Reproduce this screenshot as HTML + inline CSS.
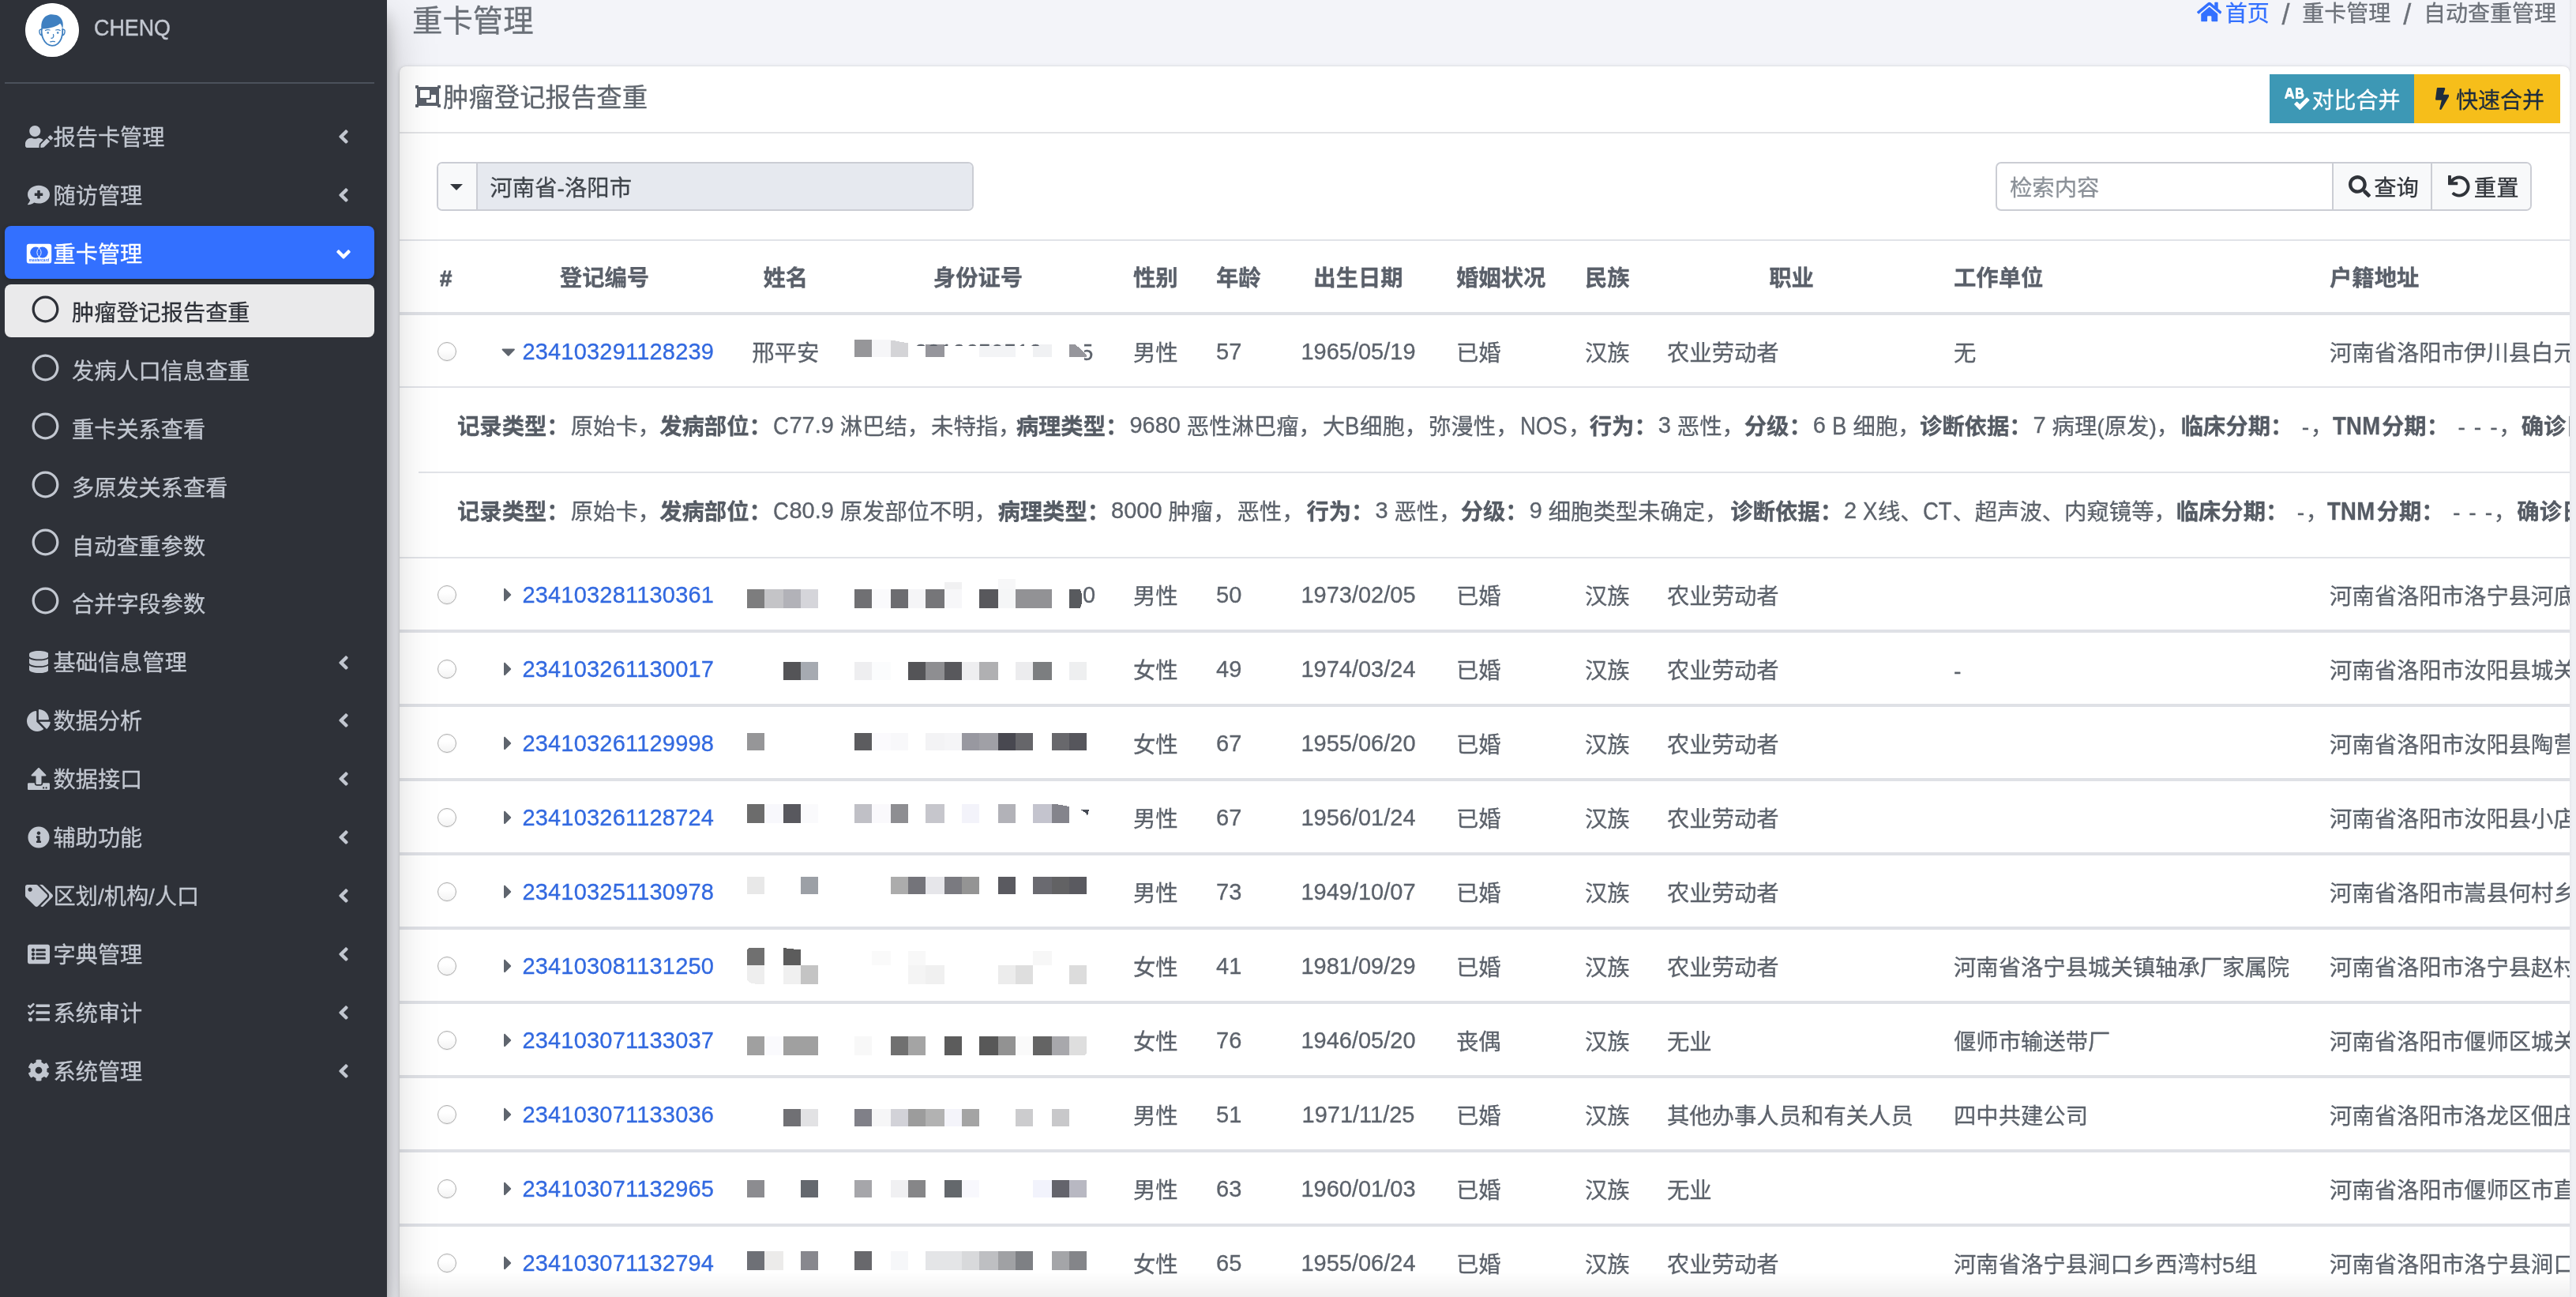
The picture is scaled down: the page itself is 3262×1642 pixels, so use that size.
<!DOCTYPE html><html lang="zh-CN"><head><meta charset="utf-8"><title>重卡管理</title><style>
*{box-sizing:border-box}
html,body{margin:0;padding:0}
body{width:3262px;height:1642px;overflow:hidden;position:relative;background:#f3f4f9;
 font-family:"Liberation Sans","Noto Sans CJK SC",sans-serif;font-size:28.35px;color:#5c626b;line-height:42px;-webkit-text-stroke:.3px}
svg.ic{display:inline-block;vertical-align:middle;flex:none}
a{color:#3269e0;text-decoration:none}
#sb{position:absolute;left:0;top:0;width:490px;height:1642px;background:#2e3138;z-index:5;will-change:transform;
 box-shadow:0 28px 56px rgba(0,0,0,.25),0 20px 20px rgba(0,0,0,.22)}
#av{position:absolute;left:32px;top:4px;width:68px;height:68px;border-radius:50%;background:#fff;overflow:hidden}
#un{position:absolute;left:118.5px;top:13.2px;font-size:30px;line-height:44px;color:#c2c7d0;white-space:nowrap;transform-origin:0 50%;transform:scaleX(.895);-webkit-text-stroke:.45px #c2c7d0}
#dv{position:absolute;left:6px;top:104px;width:468px;height:2px;background:#4b515b}
.ni{position:absolute;left:6px;width:468px;height:67px;border-radius:8px;color:#c2c7d0;white-space:nowrap}
.ni.act{background:#3370ff;color:#fff;box-shadow:0 2px 6px rgba(0,0,0,.24)}
.ni.sub.act{background:#eaeaeb;color:#2e3138;box-shadow:none}
.ni .ib{position:absolute;left:25.5px;top:21.2px;width:35px;height:28px;text-align:center;line-height:28px}
.ni .ib svg{vertical-align:top}
.ni .tx{position:absolute;left:61.5px;top:15.4px;line-height:42px;font-size:28.2px}
.ni.sub .ib{left:34.3px;top:14.3px;width:35px;height:35px}
.ni.sub .tx{left:85px}
.ni .ch{position:absolute;left:422px;top:21.6px;width:14px;height:28px;display:block;line-height:0}
.ni .ch svg{display:block}
.ni.act .ch{transform:rotate(-90deg);left:421.5px;top:22.1px}
#main{position:absolute;left:490px;top:0;width:2772px;height:1642px;will-change:transform}
#h1{position:absolute;left:32px;top:-2.5px;font-size:38.4px;line-height:57px;color:#6b7078;white-space:nowrap}
#bc{position:absolute;right:25px;top:-3.5px;line-height:42px;font-size:28px;color:#6c7179;white-space:nowrap}
#bc a{color:#3370ff}
#bc .sep{display:inline-block;padding:0 15.8px;font-size:36px;line-height:42px;vertical-align:top;position:relative;top:1px}
#card{position:absolute;left:16px;top:84px;width:2748px;height:1600px;background:#fff;border-radius:8px;
 box-shadow:0 0 2px rgba(0,0,0,.125),0 2px 6px rgba(0,0,0,.2);overflow:hidden}
#ch{position:absolute;left:0;top:0;width:100%;height:85px;border-bottom:2px solid #e3e4e7}
#ct{position:absolute;left:19px;top:16px;font-size:32.4px;line-height:48px;color:#5f656d;white-space:nowrap}
.btn{position:absolute;top:10px;height:62px;line-height:68px;padding:0 18px;white-space:nowrap;font-size:28px}
#b1{left:2368px;width:183px;background:#3d98b5;color:#fff}
#b2{left:2551px;width:185px;background:#f6be1a;color:#1f2d3d}
#flt{position:absolute;left:0;top:86px;width:100%;height:134px}
.ig{position:absolute;top:35px;height:62px;border:2px solid #cbcdd4;border-radius:7px;overflow:hidden;display:flex;background:#fff}
.ig>div{height:58px;line-height:62.6px;white-space:nowrap}
#tb{position:absolute;left:0;top:219px;border-collapse:collapse;table-layout:fixed;width:3100px}
#tb th,#tb td{padding:27px 24px 21px;line-height:42px;border-top:2px solid #e1e3e8;border-bottom:4px solid #dfe1e6;white-space:nowrap;text-align:left;vertical-align:top;overflow:visible}
#tb th{padding-top:26px;font-weight:bold;border-bottom:4px solid #dfe1e6;color:#5a606a}
#tb tr.r0 td,#tb td.dt{border-bottom:2px solid #e1e3e8}
#tb td{border-top:none}
#tb th:first-child,#tb td:first-child{padding-left:48px}
.c{text-align:center !important}
.rd{display:inline-block;width:24px;height:24px;border-radius:50%;border:1.4px solid #adadad;background:linear-gradient(#fff 40%,#f3f3f3);vertical-align:middle;margin-top:-9px;box-shadow:inset 0 1px 2px rgba(0,0,0,.06),0 1px 1px rgba(0,0,0,.05)}
.lk,.n{font-size:29px;position:relative;top:-2px;line-height:28px}
.lk{margin-left:1.5px;letter-spacing:.2px}
.ex{display:inline-block;width:17.5px;height:28px;vertical-align:middle;margin-top:-9px;margin-left:3px;text-align:center}
.ex svg{vertical-align:top}
.dt{padding:0 !important}
.dt .d1{height:106px;padding:27.8px 0 0 73px;}
.dt .d2{height:108px;padding:27.5px 0 0 73px;border-top:2px solid #e1e3e8;margin-left:24px;padding-left:49px}
.dt b{color:#555b64}
.g{display:inline-block;width:2px}
.sg{display:inline-block;white-space:pre}
.hy{display:inline-block;width:12.5px;text-align:center}
.u{display:inline-block;transform:scale(.97,1.075);transform-origin:0 73.4%}
#mz{position:absolute;left:0;top:0}
#bot{position:absolute;left:506px;top:1610px;width:2748px;height:32px;z-index:4;background:linear-gradient(rgba(0,0,0,0),rgba(0,0,0,.06))}
#rt{position:absolute;left:3254px;top:0;width:8px;height:1642px;z-index:8;background:linear-gradient(90deg,#e6e7ec,#eff0f4 40%)}
</style></head><body><div id="sb"><div id="av"><svg width="68" height="68" viewBox="0 0 68 68"><circle cx="34" cy="34" r="34" fill="#fff"/>
<path d="M20.5 33c-1.2-9 2.2-16.5 9.5-18.3 3.2-.9 5.5-.3 7.2.1 5.800.2 10.600 5.500 10.600 12.300 0 2.100-.200 4.200-.700 5.900-.500-3.200-1.600-5.800-3-7.300-3.800 3.600-12 6.200-20.700 6.800-1.500.100-2.500.200-2.900.500z" fill="#3f80c1"/>
<path d="M20.800 32.500c-.400 4.600.200 9 1.900 12.700 2.300 5.100 6.400 8.600 11.300 8.600 5.200 0 9.400-3.700 11.600-9 1.500-3.600 2-7.900 1.600-12" fill="none" stroke="#3f80c1" stroke-width="1.800" stroke-linecap="round"/>
<path d="M20.800 33.500c-2-.700-3.200.500-2.900 2.900.300 2.300 1.600 4.300 3.600 4.500M47.200 33.500c2-.700 3.200.500 2.900 2.900-.300 2.300-1.600 4.300-3.600 4.500" fill="none" stroke="#3f80c1" stroke-width="1.400" stroke-linecap="round"/>
<path d="M25.500 34.500c1.700-1 3.700-1.100 5.500-.500M38.800 34c1.800-.700 3.800-.500 5.400.500" fill="none" stroke="#3f80c1" stroke-width="1.300" stroke-linecap="round"/>
<circle cx="28.700" cy="37.500" r="1.300" fill="#3f80c1"/><circle cx="41.200" cy="37.500" r="1.300" fill="#3f80c1"/>
<path d="M35.500 39.500c.600 1.800.500 3.500-.900 4.600-.500.400-1.200.400-1.700.100" fill="none" stroke="#3f80c1" stroke-width="1.200" stroke-linecap="round"/>
<path d="M31.800 48.800c1.800-.500 3.700-.600 5.500-.200" fill="none" stroke="#3f80c1" stroke-width="1.400" stroke-linecap="round"/></svg></div><div id="un">CHENQ</div><div id="dv"></div><div class="ni" style="top:137.9px"><span class="ib"><svg class="ic" width="35.0" height="28" viewBox="0 0 640 512" ><path fill="currentColor" d="M224 256c70.7 0 128-57.3 128-128S294.7 0 224 0 96 57.3 96 128s57.3 128 128 128zm89.6 32h-16.7c-22.2 10.2-46.9 16-72.9 16s-50.6-5.8-72.9-16h-16.7C60.2 288 0 348.2 0 422.4V464c0 26.5 21.5 48 48 48h274.9c-2.4-6.8-3.4-14-2.6-21.3l6.8-60.9 1.2-11.1 7.9-7.9 77.3-77.3c-24.5-27.7-60-45.500-99.900-45.500zm45.300 145.300l-6.800 61c-1.100 10.200 7.500 18.800 17.600 17.600l60.900-6.800 137.900-137.900-71.700-71.700-137.900 137.800zM633 268.900L595.100 231c-9.300-9.300-24.500-9.300-33.800 0l-37.800 37.800-4.100 4.100 71.800 71.700 41.800-41.800c9.300-9.400 9.300-24.500 0-33.900z"/></svg></span><span class="tx">报告卡管理</span><span class="ch"><svg class="ic" width="14.0" height="28" viewBox="0 0 256 512" ><path fill="currentColor" d="M31.7 239l136-136c9.4-9.4 24.6-9.4 33.9 0l22.6 22.6c9.4 9.4 9.4 24.6 0 33.9L127.9 256l96.4 96.4c9.4 9.4 9.4 24.6 0 33.9L201.7 409c-9.4 9.4-24.6 9.4-33.9 0l-136-136c-9.5-9.4-9.5-24.6-.1-34z"/></svg></span></div><div class="ni" style="top:211.8px"><span class="ib"><svg class="ic" width="28.0" height="28" viewBox="0 0 512 512" ><path fill="currentColor" d="M256 32C114.620 32 0 125.120 0 240c0 49.560 21.410 95 57 130.740C44.460 421.050 2.700 466 2.200 466.500a8 8 0 0 0-1.500 8.700 7.830 7.830 0 0 0 7.300 4.800c66.300 0 116-31.800 140.600-51.400A304.660 304.660 0 0 0 256 448c141.390 0 256-93.120 256-208S397.390 32 256 32zm96 232a8 8 0 0 1-8 8h-56v56a8 8 0 0 1-8 8h-48a8 8 0 0 1-8-8v-56h-56a8 8 0 0 1-8-8v-48a8 8 0 0 1 8-8h56v-56a8 8 0 0 1 8-8h48a8 8 0 0 1 8 8v56h56a8 8 0 0 1 8 8z"/></svg></span><span class="tx">随访管理</span><span class="ch"><svg class="ic" width="14.0" height="28" viewBox="0 0 256 512" ><path fill="currentColor" d="M31.7 239l136-136c9.4-9.4 24.6-9.4 33.9 0l22.6 22.6c9.4 9.4 9.4 24.6 0 33.9L127.9 256l96.4 96.4c9.4 9.4 9.4 24.6 0 33.9L201.7 409c-9.4 9.4-24.6 9.4-33.9 0l-136-136c-9.5-9.4-9.5-24.6-.1-34z"/></svg></span></div><div class="ni act" style="top:285.7px"><span class="ib"><svg class="ic" width="35" height="28" viewBox="0 0 35 28"><rect x="1.8" y="1.8" width="31.4" height="24.6" rx="3" fill="currentColor"/>
<circle cx="13.2" cy="12.6" r="7" fill="#3370ff"/><circle cx="21.8" cy="12.6" r="7" fill="#3370ff"/>
<path d="M17.5 7.1a7 7 0 0 1 0 11a7 7 0 0 1 0-11z" fill="none" stroke="currentColor" stroke-width="0.9"/>
<text x="17.5" y="24.2" text-anchor="middle" font-family="Liberation Sans,sans-serif" font-size="4.7" font-weight="bold" font-style="italic" fill="#3370ff">mastercard</text></svg></span><span class="tx">重卡管理</span><span class="ch"><svg class="ic" width="14.0" height="28" viewBox="0 0 256 512" ><path fill="currentColor" d="M31.7 239l136-136c9.4-9.4 24.6-9.4 33.9 0l22.6 22.6c9.4 9.4 9.4 24.6 0 33.9L127.9 256l96.4 96.4c9.4 9.4 9.4 24.6 0 33.9L201.7 409c-9.4 9.4-24.6 9.4-33.9 0l-136-136c-9.5-9.4-9.5-24.6-.1-34z"/></svg></span></div><div class="ni sub act" style="top:359.6px"><span class="ib"><svg class="ic" width="35.0" height="35" viewBox="0 0 512 512" ><path fill="currentColor" d="M256 8C119 8 8 119 8 256s111 248 248 248 248-111 248-248S393 8 256 8zm0 448c-110.5 0-200-89.5-200-200S145.5 56 256 56s200 89.5 200 200-89.5 200-200 200z"/></svg></span><span class="tx">肿瘤登记报告查重</span></div><div class="ni sub" style="top:433.5px"><span class="ib"><svg class="ic" width="35.0" height="35" viewBox="0 0 512 512" ><path fill="currentColor" d="M256 8C119 8 8 119 8 256s111 248 248 248 248-111 248-248S393 8 256 8zm0 448c-110.5 0-200-89.5-200-200S145.5 56 256 56s200 89.5 200 200-89.5 200-200 200z"/></svg></span><span class="tx">发病人口信息查重</span></div><div class="ni sub" style="top:507.4px"><span class="ib"><svg class="ic" width="35.0" height="35" viewBox="0 0 512 512" ><path fill="currentColor" d="M256 8C119 8 8 119 8 256s111 248 248 248 248-111 248-248S393 8 256 8zm0 448c-110.5 0-200-89.5-200-200S145.5 56 256 56s200 89.5 200 200-89.5 200-200 200z"/></svg></span><span class="tx">重卡关系查看</span></div><div class="ni sub" style="top:581.3px"><span class="ib"><svg class="ic" width="35.0" height="35" viewBox="0 0 512 512" ><path fill="currentColor" d="M256 8C119 8 8 119 8 256s111 248 248 248 248-111 248-248S393 8 256 8zm0 448c-110.5 0-200-89.5-200-200S145.5 56 256 56s200 89.5 200 200-89.5 200-200 200z"/></svg></span><span class="tx">多原发关系查看</span></div><div class="ni sub" style="top:655.2px"><span class="ib"><svg class="ic" width="35.0" height="35" viewBox="0 0 512 512" ><path fill="currentColor" d="M256 8C119 8 8 119 8 256s111 248 248 248 248-111 248-248S393 8 256 8zm0 448c-110.5 0-200-89.5-200-200S145.5 56 256 56s200 89.5 200 200-89.5 200-200 200z"/></svg></span><span class="tx">自动查重参数</span></div><div class="ni sub" style="top:729.1px"><span class="ib"><svg class="ic" width="35.0" height="35" viewBox="0 0 512 512" ><path fill="currentColor" d="M256 8C119 8 8 119 8 256s111 248 248 248 248-111 248-248S393 8 256 8zm0 448c-110.5 0-200-89.5-200-200S145.5 56 256 56s200 89.5 200 200-89.5 200-200 200z"/></svg></span><span class="tx">合并字段参数</span></div><div class="ni" style="top:803.0px"><span class="ib"><svg class="ic" width="24.5" height="28" viewBox="0 0 448 512" ><path fill="currentColor" d="M448 73.143v45.714C448 159.143 347.667 192 224 192S0 159.143 0 118.857V73.143C0 32.857 100.333 0 224 0s224 32.857 224 73.143zM448 176v102.857C448 319.143 347.667 352 224 352S0 319.143 0 278.857V176c48.125 33.143 136.208 48.572 224 48.572S399.874 209.143 448 176zm0 160v102.857C448 479.143 347.667 512 224 512S0 479.143 0 438.857V336c48.125 33.143 136.208 48.572 224 48.572S399.874 369.143 448 336z"/></svg></span><span class="tx">基础信息管理</span><span class="ch"><svg class="ic" width="14.0" height="28" viewBox="0 0 256 512" ><path fill="currentColor" d="M31.7 239l136-136c9.4-9.4 24.6-9.4 33.9 0l22.6 22.6c9.4 9.4 9.4 24.6 0 33.9L127.9 256l96.4 96.4c9.4 9.4 9.4 24.6 0 33.9L201.7 409c-9.4 9.4-24.6 9.4-33.9 0l-136-136c-9.5-9.4-9.5-24.6-.1-34z"/></svg></span></div><div class="ni" style="top:876.9px"><span class="ib"><svg class="ic" width="29.75" height="28" viewBox="0 0 544 512" ><path fill="currentColor" d="M527.79 288H290.5l158.03 158.03c6.04 6.04 15.98 6.53 22.19.68 38.7-36.46 65.32-85.61 73.13-140.86 1.34-9.46-6.51-17.85-16.06-17.85zm-15.83-64.8C503.72 103.74 408.26 8.28 288.8.04 279.68-.59 272 7.1 272 16.24V240h223.77c9.14 0 16.82-7.68 16.19-16.8zM224 288V50.71c0-9.55-8.39-17.4-17.84-16.06C86.99 51.49-4.1 155.6.14 280.37 4.5 408.51 114.83 513.59 243.03 511.98c50.4-.63 96.97-16.87 135.26-44.03 7.9-5.6 8.42-17.23 1.57-24.08L224 288z"/></svg></span><span class="tx">数据分析</span><span class="ch"><svg class="ic" width="14.0" height="28" viewBox="0 0 256 512" ><path fill="currentColor" d="M31.7 239l136-136c9.4-9.4 24.6-9.4 33.9 0l22.6 22.6c9.4 9.4 9.4 24.6 0 33.9L127.9 256l96.4 96.4c9.4 9.4 9.4 24.6 0 33.9L201.7 409c-9.4 9.4-24.6 9.4-33.9 0l-136-136c-9.5-9.4-9.5-24.6-.1-34z"/></svg></span></div><div class="ni" style="top:950.8px"><span class="ib"><svg class="ic" width="28.0" height="28" viewBox="0 0 512 512" ><path fill="currentColor" d="M296 384h-80c-13.3 0-24-10.7-24-24V192h-87.7c-17.8 0-26.7-21.5-14.1-34.1L242.3 5.7c7.5-7.5 19.8-7.5 27.3 0l152.2 152.2c12.6 12.6 3.7 34.1-14.1 34.1H320v168c0 13.3-10.7 24-24 24zm216-8v112c0 13.3-10.7 24-24 24H24c-13.3 0-24-10.7-24-24V376c0-13.3 10.7-24 24-24h136v8c0 30.9 25.1 56 56 56h80c30.9 0 56-25.1 56-56v-8h136c13.3 0 24 10.7 24 24zm-124 88c0-11-9-20-20-20s-20 9-20 20 9 20 20 20 20-9 20-20zm64 0c0-11-9-20-20-20s-20 9-20 20 9 20 20 20 20-9 20-20z"/></svg></span><span class="tx">数据接口</span><span class="ch"><svg class="ic" width="14.0" height="28" viewBox="0 0 256 512" ><path fill="currentColor" d="M31.7 239l136-136c9.4-9.4 24.6-9.4 33.9 0l22.6 22.6c9.4 9.4 9.4 24.6 0 33.9L127.9 256l96.4 96.4c9.4 9.4 9.4 24.6 0 33.9L201.7 409c-9.4 9.4-24.6 9.4-33.9 0l-136-136c-9.5-9.4-9.5-24.6-.1-34z"/></svg></span></div><div class="ni" style="top:1024.7px"><span class="ib"><svg class="ic" width="28.0" height="28" viewBox="0 0 512 512" ><path fill="currentColor" d="M256 8C119.043 8 8 119.083 8 256c0 136.997 111.043 248 248 248s248-111.003 248-248C504 119.083 392.957 8 256 8zm0 110c23.196 0 42 18.804 42 42s-18.804 42-42 42-42-18.804-42-42 18.804-42 42-42zm56 254c0 6.627-5.373 12-12 12h-88c-6.627 0-12-5.373-12-12v-24c0-6.627 5.373-12 12-12h12v-64h-12c-6.627 0-12-5.373-12-12v-24c0-6.627 5.373-12 12-12h64c6.627 0 12 5.373 12 12v100h12c6.627 0 12 5.373 12 12v24z"/></svg></span><span class="tx">辅助功能</span><span class="ch"><svg class="ic" width="14.0" height="28" viewBox="0 0 256 512" ><path fill="currentColor" d="M31.7 239l136-136c9.4-9.4 24.6-9.4 33.9 0l22.6 22.6c9.4 9.4 9.4 24.6 0 33.9L127.9 256l96.4 96.4c9.4 9.4 9.4 24.6 0 33.9L201.7 409c-9.4 9.4-24.6 9.4-33.9 0l-136-136c-9.5-9.4-9.5-24.6-.1-34z"/></svg></span></div><div class="ni" style="top:1098.6px"><span class="ib"><svg class="ic" width="35.0" height="28" viewBox="0 0 640 512" ><path fill="currentColor" d="M497.941 225.941L286.059 14.059A48 48 0 0 0 252.118 0H48C21.49 0 0 21.49 0 48v204.118a48 48 0 0 0 14.059 33.941l211.882 211.882c18.744 18.745 49.136 18.746 67.882 0l204.118-204.118c18.745-18.745 18.745-49.137 0-67.882zM112 160c-26.51 0-48-21.49-48-48s21.49-48 48-48 48 21.49 48 48-21.49 48-48 48zm513.941 133.823L421.823 497.941c-18.745 18.745-49.137 18.745-67.882 0l-.36-.36L527.64 323.522c16.999-16.999 26.36-39.6 26.36-63.64s-9.362-46.641-26.36-63.64L331.397 0h48.721a48 48 0 0 1 33.941 14.059l211.882 211.882c18.745 18.745 18.745 49.137 0 67.882z"/></svg></span><span class="tx">区划/机构/人口</span><span class="ch"><svg class="ic" width="14.0" height="28" viewBox="0 0 256 512" ><path fill="currentColor" d="M31.7 239l136-136c9.4-9.4 24.6-9.4 33.9 0l22.6 22.6c9.4 9.4 9.4 24.6 0 33.9L127.9 256l96.4 96.4c9.4 9.4 9.4 24.6 0 33.9L201.7 409c-9.4 9.4-24.6 9.4-33.9 0l-136-136c-9.5-9.4-9.5-24.6-.1-34z"/></svg></span></div><div class="ni" style="top:1172.5px"><span class="ib"><svg class="ic" width="28.0" height="28" viewBox="0 0 512 512" ><path fill="currentColor" d="M464 480H48c-26.51 0-48-21.49-48-48V80c0-26.51 21.49-48 48-48h416c26.51 0 48 21.49 48 48v352c0 26.51-21.49 48-48 48zM128 120c-22.091 0-40 17.909-40 40s17.909 40 40 40 40-17.909 40-40-17.909-40-40-40zm0 96c-22.091 0-40 17.909-40 40s17.909 40 40 40 40-17.909 40-40-17.909-40-40-40zm0 96c-22.091 0-40 17.909-40 40s17.909 40 40 40 40-17.909 40-40-17.909-40-40-40zm288-136v-32c0-6.627-5.373-12-12-12H204c-6.627 0-12 5.373-12 12v32c0 6.627 5.373 12 12 12h200c6.627 0 12-5.373 12-12zm0 96v-32c0-6.627-5.373-12-12-12H204c-6.627 0-12 5.373-12 12v32c0 6.627 5.373 12 12 12h200c6.627 0 12-5.373 12-12zm0 96v-32c0-6.627-5.373-12-12-12H204c-6.627 0-12 5.373-12 12v32c0 6.627 5.373 12 12 12h200c6.627 0 12-5.373 12-12z"/></svg></span><span class="tx">字典管理</span><span class="ch"><svg class="ic" width="14.0" height="28" viewBox="0 0 256 512" ><path fill="currentColor" d="M31.7 239l136-136c9.4-9.4 24.6-9.4 33.9 0l22.6 22.6c9.4 9.4 9.4 24.6 0 33.9L127.9 256l96.4 96.4c9.4 9.4 9.4 24.6 0 33.9L201.7 409c-9.4 9.4-24.6 9.4-33.9 0l-136-136c-9.5-9.4-9.5-24.6-.1-34z"/></svg></span></div><div class="ni" style="top:1246.4px"><span class="ib"><svg class="ic" width="28.0" height="28" viewBox="0 0 512 512" ><path fill="currentColor" d="M139.61 35.5a12 12 0 0 0-17 0L58.93 98.81l-22.7-22.12a12 12 0 0 0-17 0L3.53 92.41a12 12 0 0 0 0 17l47.59 47.4a12.78 12.78 0 0 0 17.61 0l15.59-15.62L156.52 69a12.09 12.09 0 0 0 .09-17zm0 159.19a12 12 0 0 0-17 0l-63.68 63.72-22.7-22.1a12 12 0 0 0-17 0L3.53 252a12 12 0 0 0 0 17L51 316.5a12.77 12.77 0 0 0 17.6 0l15.7-15.69 72.2-72.22a12 12 0 0 0 .09-16.9zM64 368c-26.49 0-48.59 21.5-48.59 48S37.53 464 64 464a48 48 0 0 0 0-96zm432 16H208a16 16 0 0 0-16 16v32a16 16 0 0 0 16 16h288a16 16 0 0 0 16-16v-32a16 16 0 0 0-16-16zm0-320H208a16 16 0 0 0-16 16v32a16 16 0 0 0 16 16h288a16 16 0 0 0 16-16V80a16 16 0 0 0-16-16zm0 160H208a16 16 0 0 0-16 16v32a16 16 0 0 0 16 16h288a16 16 0 0 0 16-16v-32a16 16 0 0 0-16-16z"/></svg></span><span class="tx">系统审计</span><span class="ch"><svg class="ic" width="14.0" height="28" viewBox="0 0 256 512" ><path fill="currentColor" d="M31.7 239l136-136c9.4-9.4 24.6-9.4 33.9 0l22.6 22.6c9.4 9.4 9.4 24.6 0 33.9L127.9 256l96.4 96.4c9.4 9.4 9.4 24.6 0 33.9L201.7 409c-9.4 9.4-24.6 9.4-33.9 0l-136-136c-9.5-9.4-9.5-24.6-.1-34z"/></svg></span></div><div class="ni" style="top:1320.3px"><span class="ib"><svg class="ic" width="28.0" height="28" viewBox="0 0 512 512" ><path fill="currentColor" d="M487.4 315.7l-42.6-24.6c4.3-23.2 4.3-47 0-70.2l42.6-24.6c4.9-2.8 7.1-8.6 5.5-14-11.1-35.6-30-67.8-54.7-94.6-3.8-4.1-10-5.1-14.8-2.3L380.8 110c-17.9-15.4-38.5-27.3-60.8-35.1V25.8c0-5.6-3.9-10.5-9.4-11.7-36.7-8.2-74.3-7.8-109.2 0-5.5 1.2-9.4 6.1-9.4 11.7V75c-22.2 7.9-42.8 19.8-60.8 35.1L88.7 85.5c-4.9-2.8-11-1.9-14.8 2.3-24.7 26.7-43.6 58.9-54.7 94.6-1.7 5.4.6 11.2 5.5 14L67.3 221c-4.3 23.2-4.3 47 0 70.2l-42.6 24.6c-4.9 2.8-7.1 8.6-5.5 14 11.1 35.6 30 67.8 54.7 94.6 3.8 4.1 10 5.1 14.8 2.3l42.6-24.6c17.9 15.4 38.5 27.3 60.8 35.1v49.2c0 5.6 3.9 10.5 9.4 11.7 36.7 8.2 74.3 7.8 109.2 0 5.5-1.2 9.4-6.1 9.4-11.7v-49.2c22.2-7.9 42.8-19.8 60.8-35.1l42.6 24.6c4.9 2.8 11 1.9 14.8-2.3 24.7-26.7 43.6-58.9 54.7-94.6 1.5-5.5-.7-11.3-5.6-14.1zM256 336c-44.1 0-80-35.9-80-80s35.9-80 80-80 80 35.9 80 80-35.9 80-80 80z"/></svg></span><span class="tx">系统管理</span><span class="ch"><svg class="ic" width="14.0" height="28" viewBox="0 0 256 512" ><path fill="currentColor" d="M31.7 239l136-136c9.4-9.4 24.6-9.4 33.9 0l22.6 22.6c9.4 9.4 9.4 24.6 0 33.9L127.9 256l96.4 96.4c9.4 9.4 9.4 24.6 0 33.9L201.7 409c-9.4 9.4-24.6 9.4-33.9 0l-136-136c-9.5-9.4-9.5-24.6-.1-34z"/></svg></span></div></div><div id="main">
<div id="h1">重卡管理</div>
<div id="bc"><a><svg class="ic" width="31.5" height="28" viewBox="0 0 576 512" style="margin:-8px 4.5px 0 -5px"><path fill="#3370ff" d="M280.37 148.26L96 300.11V464a16 16 0 0 0 16 16l112.06-.29a16 16 0 0 0 15.92-16V368a16 16 0 0 1 16-16h64a16 16 0 0 1 16 16v95.64a16 16 0 0 0 16 16.05L464 480a16 16 0 0 0 16-16V300L295.67 148.26a12.19 12.19 0 0 0-15.3 0zM571.6 251.47L488 182.56V44.05a12 12 0 0 0-12-12h-56a12 12 0 0 0-12 12v72.61L318.47 43a48 48 0 0 0-61 0L4.34 251.47a12 12 0 0 0-1.6 16.9l25.5 31A12 12 0 0 0 45.15 301l235.22-193.74a12.19 12.19 0 0 1 15.3 0L530.9 301a12 12 0 0 0 16.9-1.6l25.5-31a12 12 0 0 0-1.7-16.93z"/></svg>首页</a><span class="sep">/</span>重卡管理<span class="sep">/</span>自动查重管理</div>
<div id="card">
 <div id="ch"><div id="ct"><svg class="ic" width="32.0" height="32" viewBox="0 0 512 512" style="margin:-8px 3px 0 1px"><path fill="#5a606a" d="M480 128V96h20c6.627 0 12-5.373 12-12V44c0-6.627-5.373-12-12-12h-40c-6.627 0-12 5.373-12 12v20H64V44c0-6.627-5.373-12-12-12H12C5.373 32 0 37.373 0 44v40c0 6.627 5.373 12 12 12h20v320H12c-6.627 0-12 5.373-12 12v40c0 6.627 5.373 12 12 12h40c6.627 0 12-5.373 12-12v-20h384v20c0 6.627 5.373 12 12 12h40c6.627 0 12-5.373 12-12v-40c0-6.627-5.373-12-12-12h-20V128zM96 276V140c0-6.627 5.373-12 12-12h168c6.627 0 12 5.373 12 12v136c0 6.627-5.373 12-12 12H108c-6.627 0-12-5.373-12-12zm320 96c0 6.627-5.373 12-12 12H236c-6.627 0-12-5.373-12-12v-52h72c13.255 0 24-10.745 24-24v-72h84c6.627 0 12 5.373 12 12v136z"/></svg>肿瘤登记报告查重</div>
  <div class="btn" id="b1"><svg class="ic" width="31.5" height="28" viewBox="0 0 576 512" style="margin:-9px 3px 0 1px"><path fill="#fff" d="M272 256h91.36c43.2 0 82-32.2 84.51-75.34a79.82 79.82 0 0 0-25.26-63.07 79.81 79.81 0 0 0 9.06-44.91C427.9 30.57 389.3 0 347 0h-75a16 16 0 0 0-16 16v224a16 16 0 0 0 16 16zm40-200h40a24 24 0 0 1 0 48h-40zm0 96h56a24 24 0 0 1 0 48h-56zM155.12 22.25A32 32 0 0 0 124.64 0H99.36a32 32 0 0 0-30.48 22.25L.59 235.73A16 16 0 0 0 16 256h24.93a16 16 0 0 0 15.42-11.73L68.29 208h87.42l11.94 36.27A16 16 0 0 0 183.07 256H208a16 16 0 0 0 15.420-20.270zM89.370 144L112 75.300l22.630 68.700zm482 132.480l-45.210-45.300a15.880 15.880 0 0 0-22.590 0l-151.500 151.500-55.410-55.500a15.880 15.880 0 0 0-22.590 0l-45.300 45.300a16 16 0 0 0 0 22.590l112 112.210a15.890 15.890 0 0 0 22.600 0l208-208.210a16 16 0 0 0-.020-22.590z"/></svg>对比合并</div>
  <div class="btn" id="b2"><span style="display:inline-block;width:35px;text-align:center"><svg class="ic" width="17.5" height="28" viewBox="0 0 320 512" style="margin-top:-9px"><path fill="#1f2d3d" d="M296 160H180.6l42.6-129.8C227.2 15 215.7 0 200 0H56C44 0 33.8 8.9 32.2 20.8l-32 240C-1.7 275.2 9.5 288 24 288h118.7L96.6 482.5c-3.6 15.2 8 29.5 23.3 29.5 8.4 0 16.4-4.4 20.8-12l176-304c9.3-15.9-2.2-36-20.7-36z"/></svg></span>快速合并</div>
 </div>
 <div id="flt">
  <div class="ig" style="left:47px;width:680px"><div style="width:50px;background:#f8f9fa;border-right:2px solid #cbcdd4;position:relative"><i style="position:absolute;left:14.5px;top:25.6px;border-top:8.4px solid #33373d;border-left:8.4px solid transparent;border-right:8.4px solid transparent"></i></div><div style="flex:1;background:#e6e9ef;padding-left:15.5px;color:#3f444b;line-height:62px">河南省-洛阳市</div></div>
  <div class="ig" style="left:2021px;width:679px"><div style="width:425px;padding-left:16px;color:#8b9198">检索内容</div><div style="width:126px;background:#f8f9fa;border-left:2px solid #cbcdd4;padding-left:18px;color:#30343a"><svg class="ic" width="28.0" height="28" viewBox="0 0 512 512" style="margin:-9px 4.5px 0 1px"><path fill="#30343a" d="M505 442.7L405.3 343c-4.5-4.5-10.6-7-17-7H372c27.6-35.3 44-79.7 44-128C416 93.1 322.9 0 208 0S0 93.1 0 208s93.1 208 208 208c48.3 0 92.7-16.4 128-44v16.3c0 6.4 2.5 12.5 7 17l99.7 99.7c9.4 9.4 24.6 9.4 33.9 0l28.3-28.3c9.4-9.4 9.4-24.6.1-34zM208 336c-70.7 0-128-57.2-128-128 0-70.7 57.2-128 128-128 70.7 0 128 57.2 128 128 0 70.7-57.2 128-128 128z"/></svg>查询</div><div style="width:126px;background:#f8f9fa;border-left:2px solid #cbcdd4;padding-left:18px;color:#30343a"><svg class="ic" width="28.0" height="28" viewBox="0 0 512 512" style="margin:-9px 4.500px 0 2px"><path fill="#30343a" d="M212.333 224.333H12c-6.627 0-12-5.373-12-12V12C0 5.373 5.373 0 12 0h48c6.627 0 12 5.373 12 12v78.112C117.773 39.279 184.26 7.47 258.175 8.007c136.906.994 246.448 111.623 246.157 248.532C504.041 393.258 393.12 504 256.333 504c-64.089 0-122.496-24.313-166.51-64.215-5.099-4.622-5.334-12.554-.467-17.42l33.967-33.967c4.474-4.474 11.662-4.717 16.401-.525C170.76 415.336 211.58 432 256.333 432c97.268 0 176-78.716 176-176 0-97.267-78.716-176-176-176-58.496 0-110.28 28.476-142.274 72.333h98.274c6.627 0 12 5.373 12 12v48c0 6.627-5.373 12-12 12z"/></svg>重置</div></div>
 </div>
 <table id="tb"><colgroup><col style="width:101.5px"><col style="width:316px"><col style="width:142.5px"><col style="width:345px"><col style="width:105px"><col style="width:104px"><col style="width:200px"><col style="width:163px"><col style="width:104px"><col style="width:363px"><col style="width:476px"><col style="width:700px"></colgroup><thead><tr><th class=""><span style="font-size:27.5px;-webkit-text-stroke:.9px #5a606a;margin-left:3px;position:relative;top:-.5px">#</span></th><th class="c">登记编号</th><th class="c">姓名</th><th class="c">身份证号</th><th class="">性别</th><th class="">年龄</th><th class="c">出生日期</th><th class="">婚姻状况</th><th class="">民族</th><th class="c">职业</th><th class="">工作单位</th><th class="">户籍地址</th></tr></thead><tbody><tr class="r0"><td><span class="rd"></span></td><td><span class="ex"><svg class="ic" width="17.5" height="28" viewBox="0 0 320 512" ><path fill="#5f656e" d="M31.3 192h257.3c17.8 0 26.7 21.5 14.1 34.1L174.1 354.8c-7.8 7.8-20.5 7.8-28.3 0L17.2 226.1C4.6 213.5 13.5 192 31.3 192z"/></svg></span> <a class="lk">234103291128239</a></td><td class="c">邢平安</td><td class="c"></td><td>男性</td><td><span class="n">57</span></td><td class="c"><span class="n">1965/05/19</span></td><td>已婚</td><td>汉族</td><td>农业劳动者</td><td>无</td><td>河南省洛阳市伊川县白元镇</td></tr><tr><td colspan="12" class="dt"><div class="d1"><span class="sg" style="width:256.2px"><b>记录类型：<i class="g"></i></b>原始卡，<i class="g"></i></span><span class="sg" style="width:451.5px"><b>发病部位：<i class="g"></i></b><span class="u">C</span><span class="n">77.9</span> 淋巴结，<i class="g"></i>未特指，<i class="g"></i></span><span class="sg" style="width:726.1px"><b>病理类型：<i class="g"></i></b><span class="n">9680</span> 恶性淋巴瘤，<i class="g"></i>大<span class="u">B</span>细胞，<i class="g"></i>弥漫性，<i class="g"></i><span class="u">NOS</span>，<i class="g"></i></span><span class="sg" style="width:196.0px"><b>行为：<i class="g"></i></b><span class="n">3</span> 恶性，<i class="g"></i></span><span class="sg" style="width:222.1px"><b>分级：<i class="g"></i></b><span class="n">6</span> <span class="u">B</span> 细胞，<i class="g"></i></span><span class="sg" style="width:330.8px"><b>诊断依据：<i class="g"></i></b><span class="n">7</span> 病理(原发)，<i class="g"></i></span><span class="sg" style="width:192.0px"><b>临床分期：<i class="g"></i></b> <span class="hy">-</span>，<i class="g"></i></span><span class="sg" style="width:239.0px"><b><span class="u" style="letter-spacing:.3px">TNM</span>分期：<i class="g"></i></b> <span class="hy">-</span> <span class="hy">-</span> <span class="hy">-</span>，<i class="g"></i></span><span class="sg"><b>确诊日期：<i class="g"></i></b></span></div><div class="d2"><span class="sg" style="width:256.2px"><b>记录类型：<i class="g"></i></b>原始卡，<i class="g"></i></span><span class="sg" style="width:428.2px"><b>发病部位：<i class="g"></i></b><span class="u">C</span><span class="n">80.9</span> 原发部位不明，<i class="g"></i></span><span class="sg" style="width:391.0px"><b>病理类型：<i class="g"></i></b><span class="n">8000</span> 肿瘤，<i class="g"></i>恶性，<i class="g"></i></span><span class="sg" style="width:195.3px"><b>行为：<i class="g"></i></b><span class="n">3</span> 恶性，<i class="g"></i></span><span class="sg" style="width:341.6px"><b>分级：<i class="g"></i></b><span class="n">9</span> 细胞类型未确定，<i class="g"></i></span><span class="sg" style="width:564.4px"><b>诊断依据：<i class="g"></i></b><span class="n">2</span> <span class="u">X</span>线、<span class="u">CT</span>、超声波、内窥镜等，<i class="g"></i></span><span class="sg" style="width:191.6px"><b>临床分期：<i class="g"></i></b> <span class="hy">-</span>，<i class="g"></i></span><span class="sg" style="width:240.1px"><b><span class="u" style="letter-spacing:.3px">TNM</span>分期：<i class="g"></i></b> <span class="hy">-</span> <span class="hy">-</span> <span class="hy">-</span>，<i class="g"></i></span><span class="sg"><b>确诊日期：<i class="g"></i></b></span></div></td></tr></tbody><tbody><tr class="r1"><td><span class="rd"></span></td><td><span class="ex"><svg class="ic" width="10.5" height="28" viewBox="0 0 192 512" ><path fill="#5f656e" d="M0 384.662V127.338c0-17.818 21.543-26.741 34.142-14.142l128.662 128.662c7.81 7.81 7.81 20.474 0 28.284L34.142 398.804C21.543 411.404 0 402.48 0 384.662z"/></svg></span> <a class="lk">234103281130361</a></td><td class="c"></td><td class="c"></td><td>男性</td><td><span class="n">50</span></td><td class="c"><span class="n">1973/02/05</span></td><td>已婚</td><td>汉族</td><td>农业劳动者</td><td></td><td>河南省洛阳市洛宁县河底镇</td></tr></tbody><tbody><tr class="r2"><td><span class="rd"></span></td><td><span class="ex"><svg class="ic" width="10.5" height="28" viewBox="0 0 192 512" ><path fill="#5f656e" d="M0 384.662V127.338c0-17.818 21.543-26.741 34.142-14.142l128.662 128.662c7.81 7.81 7.81 20.474 0 28.284L34.142 398.804C21.543 411.404 0 402.48 0 384.662z"/></svg></span> <a class="lk">234103261130017</a></td><td class="c"></td><td class="c"></td><td>女性</td><td><span class="n">49</span></td><td class="c"><span class="n">1974/03/24</span></td><td>已婚</td><td>汉族</td><td>农业劳动者</td><td>-</td><td>河南省洛阳市汝阳县城关镇</td></tr></tbody><tbody><tr class="r3"><td><span class="rd"></span></td><td><span class="ex"><svg class="ic" width="10.5" height="28" viewBox="0 0 192 512" ><path fill="#5f656e" d="M0 384.662V127.338c0-17.818 21.543-26.741 34.142-14.142l128.662 128.662c7.81 7.81 7.81 20.474 0 28.284L34.142 398.804C21.543 411.404 0 402.48 0 384.662z"/></svg></span> <a class="lk">234103261129998</a></td><td class="c"></td><td class="c"></td><td>女性</td><td><span class="n">67</span></td><td class="c"><span class="n">1955/06/20</span></td><td>已婚</td><td>汉族</td><td>农业劳动者</td><td></td><td>河南省洛阳市汝阳县陶营镇</td></tr></tbody><tbody><tr class="r4"><td><span class="rd"></span></td><td><span class="ex"><svg class="ic" width="10.5" height="28" viewBox="0 0 192 512" ><path fill="#5f656e" d="M0 384.662V127.338c0-17.818 21.543-26.741 34.142-14.142l128.662 128.662c7.81 7.81 7.81 20.474 0 28.284L34.142 398.804C21.543 411.404 0 402.48 0 384.662z"/></svg></span> <a class="lk">234103261128724</a></td><td class="c"></td><td class="c"></td><td>男性</td><td><span class="n">67</span></td><td class="c"><span class="n">1956/01/24</span></td><td>已婚</td><td>汉族</td><td>农业劳动者</td><td></td><td>河南省洛阳市汝阳县小店镇</td></tr></tbody><tbody><tr class="r5"><td><span class="rd"></span></td><td><span class="ex"><svg class="ic" width="10.5" height="28" viewBox="0 0 192 512" ><path fill="#5f656e" d="M0 384.662V127.338c0-17.818 21.543-26.741 34.142-14.142l128.662 128.662c7.81 7.81 7.81 20.474 0 28.284L34.142 398.804C21.543 411.404 0 402.48 0 384.662z"/></svg></span> <a class="lk">234103251130978</a></td><td class="c"></td><td class="c"></td><td>男性</td><td><span class="n">73</span></td><td class="c"><span class="n">1949/10/07</span></td><td>已婚</td><td>汉族</td><td>农业劳动者</td><td></td><td>河南省洛阳市嵩县何村乡</td></tr></tbody><tbody><tr class="r6"><td><span class="rd"></span></td><td><span class="ex"><svg class="ic" width="10.5" height="28" viewBox="0 0 192 512" ><path fill="#5f656e" d="M0 384.662V127.338c0-17.818 21.543-26.741 34.142-14.142l128.662 128.662c7.81 7.81 7.81 20.474 0 28.284L34.142 398.804C21.543 411.404 0 402.48 0 384.662z"/></svg></span> <a class="lk">234103081131250</a></td><td class="c"></td><td class="c"></td><td>女性</td><td><span class="n">41</span></td><td class="c"><span class="n">1981/09/29</span></td><td>已婚</td><td>汉族</td><td>农业劳动者</td><td>河南省洛宁县城关镇轴承厂家属院</td><td>河南省洛阳市洛宁县赵村镇</td></tr></tbody><tbody><tr class="r7"><td><span class="rd"></span></td><td><span class="ex"><svg class="ic" width="10.5" height="28" viewBox="0 0 192 512" ><path fill="#5f656e" d="M0 384.662V127.338c0-17.818 21.543-26.741 34.142-14.142l128.662 128.662c7.81 7.81 7.81 20.474 0 28.284L34.142 398.804C21.543 411.404 0 402.48 0 384.662z"/></svg></span> <a class="lk">234103071133037</a></td><td class="c"></td><td class="c"></td><td>女性</td><td><span class="n">76</span></td><td class="c"><span class="n">1946/05/20</span></td><td>丧偶</td><td>汉族</td><td>无业</td><td>偃师市输送带厂</td><td>河南省洛阳市偃师区城关镇</td></tr></tbody><tbody><tr class="r8"><td><span class="rd"></span></td><td><span class="ex"><svg class="ic" width="10.5" height="28" viewBox="0 0 192 512" ><path fill="#5f656e" d="M0 384.662V127.338c0-17.818 21.543-26.741 34.142-14.142l128.662 128.662c7.81 7.81 7.81 20.474 0 28.284L34.142 398.804C21.543 411.404 0 402.48 0 384.662z"/></svg></span> <a class="lk">234103071133036</a></td><td class="c"></td><td class="c"></td><td>男性</td><td><span class="n">51</span></td><td class="c"><span class="n">1971/11/25</span></td><td>已婚</td><td>汉族</td><td>其他办事人员和有关人员</td><td>四中共建公司</td><td>河南省洛阳市洛龙区佃庄镇</td></tr></tbody><tbody><tr class="r9"><td><span class="rd"></span></td><td><span class="ex"><svg class="ic" width="10.5" height="28" viewBox="0 0 192 512" ><path fill="#5f656e" d="M0 384.662V127.338c0-17.818 21.543-26.741 34.142-14.142l128.662 128.662c7.81 7.81 7.81 20.474 0 28.284L34.142 398.804C21.543 411.404 0 402.48 0 384.662z"/></svg></span> <a class="lk">234103071132965</a></td><td class="c"></td><td class="c"></td><td>男性</td><td><span class="n">63</span></td><td class="c"><span class="n">1960/01/03</span></td><td>已婚</td><td>汉族</td><td>无业</td><td></td><td>河南省洛阳市偃师区市直</td></tr></tbody><tbody><tr class="r10"><td><span class="rd"></span></td><td><span class="ex"><svg class="ic" width="10.5" height="28" viewBox="0 0 192 512" ><path fill="#5f656e" d="M0 384.662V127.338c0-17.818 21.543-26.741 34.142-14.142l128.662 128.662c7.81 7.81 7.81 20.474 0 28.284L34.142 398.804C21.543 411.404 0 402.48 0 384.662z"/></svg></span> <a class="lk">234103071132794</a></td><td class="c"></td><td class="c"></td><td>女性</td><td><span class="n">65</span></td><td class="c"><span class="n">1955/06/24</span></td><td>已婚</td><td>汉族</td><td>农业劳动者</td><td>河南省洛宁县涧口乡西湾村5组</td><td>河南省洛阳市洛宁县涧口乡</td></tr></tbody></table>
 <svg id="mz" width="1000" height="1560" viewBox="0 0 1000 1560" shape-rendering="crispEdges"><rect x="576.0" y="346.0" width="22.0" height="22.0" fill="#969699"/><rect x="598.0" y="346.0" width="24.0" height="22.0" fill="#f6f6f8"/><rect x="622.0" y="346.0" width="22.0" height="22.0" fill="#d4d4d7"/><rect x="666.0" y="352.3" width="24.0" height="15.7" fill="#96969c"/><rect x="734.0" y="352.3" width="24.0" height="15.7" fill="#f3f4f6"/><rect x="758.0" y="352.3" width="22.0" height="15.7" fill="#f3f4f6"/><rect x="802.0" y="352.3" width="24.0" height="15.7" fill="#f0f1f3"/><rect x="439.8" y="662.0" width="22.2" height="24.0" fill="#7d7d7e"/><rect x="462.0" y="662.0" width="24.0" height="24.0" fill="#c4c4c7"/><rect x="486.0" y="662.0" width="22.0" height="24.0" fill="#b2b2b8"/><rect x="508.0" y="662.0" width="22.0" height="24.0" fill="#d5d5da"/><rect x="576.0" y="662.0" width="22.0" height="24.0" fill="#707073"/><rect x="598.0" y="662.0" width="24.0" height="24.0" fill="#fafafc"/><rect x="622.0" y="662.0" width="22.0" height="24.0" fill="#6c6c70"/><rect x="644.0" y="662.0" width="22.0" height="24.0" fill="#f5f5f7"/><rect x="666.0" y="662.0" width="24.0" height="24.0" fill="#767679"/><rect x="690.0" y="662.0" width="22.0" height="24.0" fill="#f7f7f9"/><rect x="734.0" y="662.0" width="24.0" height="24.0" fill="#58585c"/><rect x="758.0" y="662.0" width="22.0" height="24.0" fill="#f5f6f7"/><rect x="780.0" y="662.0" width="22.0" height="24.0" fill="#929295"/><rect x="802.0" y="662.0" width="24.0" height="24.0" fill="#929295"/><rect x="690.0" y="653.0" width="22.0" height="9.0" fill="#f1f1f2"/><rect x="758.0" y="649.0" width="22.0" height="13.0" fill="#f7f7f8"/><rect x="486.0" y="754.0" width="22.0" height="22.5" fill="#545457"/><rect x="508.0" y="754.0" width="22.0" height="22.5" fill="#a6aab1"/><rect x="576.0" y="754.0" width="22.0" height="22.5" fill="#eeeef0"/><rect x="598.0" y="754.0" width="24.0" height="22.5" fill="#fbfcfd"/><rect x="644.0" y="754.0" width="22.0" height="22.5" fill="#545457"/><rect x="666.0" y="754.0" width="24.0" height="22.5" fill="#8e8e91"/><rect x="690.0" y="754.0" width="22.0" height="22.5" fill="#58585c"/><rect x="712.0" y="754.0" width="22.0" height="22.5" fill="#eeeef0"/><rect x="734.0" y="754.0" width="24.0" height="22.5" fill="#b0b0b2"/><rect x="780.0" y="754.0" width="22.0" height="22.5" fill="#ececee"/><rect x="802.0" y="754.0" width="24.0" height="22.5" fill="#7c7e80"/><rect x="848.0" y="754.0" width="22.0" height="22.5" fill="#eeeff0"/><rect x="439.8" y="844.0" width="22.2" height="22.0" fill="#969698"/><rect x="576.0" y="844.0" width="22.0" height="22.0" fill="#5c5c5f"/><rect x="598.0" y="844.0" width="24.0" height="22.0" fill="#fbfafd"/><rect x="622.0" y="844.0" width="22.0" height="22.0" fill="#f8f8fa"/><rect x="666.0" y="844.0" width="24.0" height="22.0" fill="#f3f3f5"/><rect x="690.0" y="844.0" width="22.0" height="22.0" fill="#f5f5f7"/><rect x="712.0" y="844.0" width="22.0" height="22.0" fill="#9898a0"/><rect x="734.0" y="844.0" width="24.0" height="22.0" fill="#a0a0a6"/><rect x="758.0" y="844.0" width="22.0" height="22.0" fill="#484850"/><rect x="780.0" y="844.0" width="22.0" height="22.0" fill="#66666a"/><rect x="826.0" y="844.0" width="22.0" height="22.0" fill="#68686c"/><rect x="848.0" y="844.0" width="22.0" height="22.0" fill="#56565c"/><rect x="439.8" y="934.0" width="22.2" height="24.0" fill="#6c6c6c"/><rect x="462.0" y="934.0" width="24.0" height="24.0" fill="#f8f8fc"/><rect x="486.0" y="934.0" width="22.0" height="24.0" fill="#58585e"/><rect x="508.0" y="934.0" width="22.0" height="24.0" fill="#fafafc"/><rect x="576.0" y="934.0" width="22.0" height="24.0" fill="#c0c0c6"/><rect x="598.0" y="934.0" width="24.0" height="24.0" fill="#faf9fc"/><rect x="622.0" y="934.0" width="22.0" height="24.0" fill="#8e8e92"/><rect x="666.0" y="934.0" width="24.0" height="24.0" fill="#c6c6cc"/><rect x="712.0" y="934.0" width="22.0" height="24.0" fill="#f3f3fa"/><rect x="758.0" y="934.0" width="22.0" height="24.0" fill="#b2b2b8"/><rect x="802.0" y="934.0" width="24.0" height="24.0" fill="#c4c4ce"/><rect x="439.8" y="1026.0" width="22.2" height="22.0" fill="#e8e8e8"/><rect x="508.0" y="1026.0" width="22.0" height="22.0" fill="#9ca0a6"/><rect x="622.0" y="1026.0" width="22.0" height="22.0" fill="#acacac"/><rect x="644.0" y="1026.0" width="22.0" height="22.0" fill="#74747a"/><rect x="666.0" y="1026.0" width="24.0" height="22.0" fill="#e6e6ea"/><rect x="690.0" y="1026.0" width="22.0" height="22.0" fill="#7a7a80"/><rect x="712.0" y="1026.0" width="22.0" height="22.0" fill="#949494"/><rect x="758.0" y="1026.0" width="22.0" height="22.0" fill="#5a5a60"/><rect x="802.0" y="1026.0" width="24.0" height="22.0" fill="#6a6a70"/><rect x="826.0" y="1026.0" width="22.0" height="22.0" fill="#626264"/><rect x="848.0" y="1026.0" width="22.0" height="22.0" fill="#5a5a60"/><rect x="486.0" y="1138.0" width="22.0" height="23.6" fill="#f0f0f0"/><rect x="508.0" y="1138.0" width="22.0" height="23.6" fill="#c4c4c4"/><rect x="644.0" y="1138.0" width="22.0" height="23.6" fill="#f4f4f4"/><rect x="666.0" y="1138.0" width="24.0" height="23.6" fill="#f0f0f0"/><rect x="758.0" y="1138.0" width="22.0" height="23.6" fill="#ececec"/><rect x="780.0" y="1138.0" width="22.0" height="23.6" fill="#dedede"/><rect x="848.0" y="1138.0" width="22.0" height="23.6" fill="#dcdcdc"/><rect x="598.0" y="1120.0" width="24.0" height="18.0" fill="#fafafa"/><rect x="644.0" y="1120.0" width="22.0" height="18.0" fill="#f8f8f8"/><rect x="802.0" y="1120.0" width="24.0" height="18.0" fill="#f7f7f7"/><rect x="439.8" y="1228.0" width="22.2" height="24.0" fill="#a0a0a0"/><rect x="462.0" y="1228.0" width="24.0" height="24.0" fill="#fafafd"/><rect x="486.0" y="1228.0" width="22.0" height="24.0" fill="#a0a0a0"/><rect x="508.0" y="1228.0" width="22.0" height="24.0" fill="#a0a0a0"/><rect x="576.0" y="1228.0" width="22.0" height="24.0" fill="#f8f8f8"/><rect x="622.0" y="1228.0" width="22.0" height="24.0" fill="#707070"/><rect x="644.0" y="1228.0" width="22.0" height="24.0" fill="#a4a4a4"/><rect x="690.0" y="1228.0" width="22.0" height="24.0" fill="#5c5c5c"/><rect x="734.0" y="1228.0" width="24.0" height="24.0" fill="#585858"/><rect x="758.0" y="1228.0" width="22.0" height="24.0" fill="#929292"/><rect x="780.0" y="1228.0" width="22.0" height="24.0" fill="#fafafa"/><rect x="802.0" y="1228.0" width="24.0" height="24.0" fill="#646464"/><rect x="826.0" y="1228.0" width="22.0" height="24.0" fill="#a8a8ac"/><rect x="486.0" y="1320.0" width="22.0" height="22.0" fill="#707074"/><rect x="508.0" y="1320.0" width="22.0" height="22.0" fill="#e2e2e4"/><rect x="576.0" y="1320.0" width="22.0" height="22.0" fill="#808088"/><rect x="598.0" y="1320.0" width="24.0" height="22.0" fill="#f6f6f7"/><rect x="622.0" y="1320.0" width="22.0" height="22.0" fill="#d2d2d8"/><rect x="644.0" y="1320.0" width="22.0" height="22.0" fill="#9c9c9c"/><rect x="666.0" y="1320.0" width="24.0" height="22.0" fill="#b2b2b2"/><rect x="690.0" y="1320.0" width="22.0" height="22.0" fill="#f4f4fa"/><rect x="712.0" y="1320.0" width="22.0" height="22.0" fill="#a4a4a4"/><rect x="780.0" y="1320.0" width="22.0" height="22.0" fill="#ccccce"/><rect x="826.0" y="1320.0" width="22.0" height="22.0" fill="#c8c8ca"/><rect x="439.8" y="1410.0" width="22.2" height="22.0" fill="#8c8c90"/><rect x="508.0" y="1410.0" width="22.0" height="22.0" fill="#64686e"/><rect x="576.0" y="1410.0" width="22.0" height="22.0" fill="#a6a6aa"/><rect x="622.0" y="1410.0" width="22.0" height="22.0" fill="#f0f0f2"/><rect x="644.0" y="1410.0" width="22.0" height="22.0" fill="#868688"/><rect x="690.0" y="1410.0" width="22.0" height="22.0" fill="#64686c"/><rect x="712.0" y="1410.0" width="22.0" height="22.0" fill="#f8f8fd"/><rect x="802.0" y="1410.0" width="24.0" height="22.0" fill="#f2f3fc"/><rect x="826.0" y="1410.0" width="22.0" height="22.0" fill="#64646c"/><rect x="848.0" y="1410.0" width="22.0" height="22.0" fill="#b8b8c2"/><rect x="439.8" y="1500.0" width="22.2" height="24.0" fill="#6e7076"/><rect x="462.0" y="1500.0" width="24.0" height="24.0" fill="#ecebea"/><rect x="508.0" y="1500.0" width="22.0" height="24.0" fill="#88888e"/><rect x="576.0" y="1500.0" width="22.0" height="24.0" fill="#68686c"/><rect x="622.0" y="1500.0" width="22.0" height="24.0" fill="#f6f7f9"/><rect x="666.0" y="1500.0" width="24.0" height="24.0" fill="#e4e5e7"/><rect x="690.0" y="1500.0" width="22.0" height="24.0" fill="#e4e5e7"/><rect x="712.0" y="1500.0" width="22.0" height="24.0" fill="#d8d9db"/><rect x="734.0" y="1500.0" width="24.0" height="24.0" fill="#bebfc2"/><rect x="758.0" y="1500.0" width="22.0" height="24.0" fill="#a0a1a4"/><rect x="780.0" y="1500.0" width="22.0" height="24.0" fill="#7e8084"/><rect x="826.0" y="1500.0" width="22.0" height="24.0" fill="#a4a5a8"/><rect x="848.0" y="1500.0" width="22.0" height="24.0" fill="#848589"/><path d="M622.0 346.0 L644.0 346.0 L644.0 350.5 L622.0 346.5z" fill="#ffffff"/><path d="M848.0 352.3 L856.0 352.3 L870.0 365.0 L870.0 368.0 L848.0 368.0z" fill="#96969c"/><path d="M848 662h14q5 12 0 24h-14z" fill="#585a5e"/><path d="M826.0 934.0 L834.0 934.5 L848.0 937.0 L848.0 958.0 L826.0 958.0z" fill="#84848c"/><path d="M862.0 940.5 L873.0 941.5 L871.0 948.7 L868.5 945.0z" fill="#464a54"/><path d="M439.8 1138v-17q0-5 5-5h17.2v22z" fill="#707070"/><path d="M486.0 1116.0 L508.0 1118.5 L508.0 1138.0 L486.0 1138.0z" fill="#5c5c5c"/><path d="M439.8 1138h22.2v23.6h-10q-12 0-12.2-8z" fill="#eeeeee"/><path d="M848 1228h22v20q0 4-4 4h-18z" fill="#dedede"/></svg><div class="n" style="position:absolute;left:865px;top:647.7px;line-height:42px">0</div><div class="n" style="position:absolute;left:866.5px;top:340.5px;line-height:42px;width:12px;overflow:hidden;direction:rtl">5</div><div class="n" style="position:absolute;left:644px;top:340.5px;line-height:42px;height:13.8px;overflow:hidden;width:204px;letter-spacing:0">&nbsp;2919650519 11</div>
</div>
</div><div id="rt"></div><div id="bot"></div></body></html>
